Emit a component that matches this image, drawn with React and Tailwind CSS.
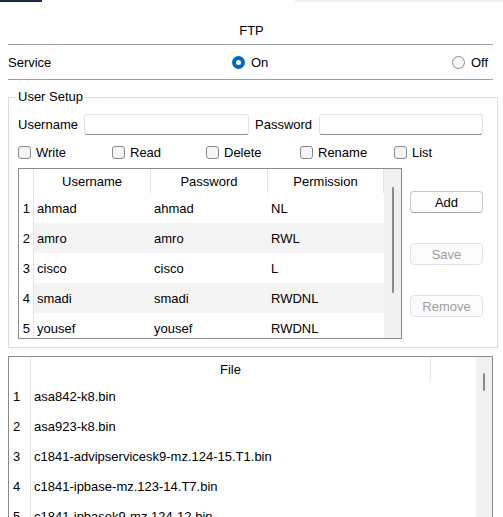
import React from 'react';

const users = [
  { n: 1, user: 'ahmad', pass: 'ahmad', perm: 'NL' },
  { n: 2, user: 'amro', pass: 'amro', perm: 'RWL' },
  { n: 3, user: 'cisco', pass: 'cisco', perm: 'L' },
  { n: 4, user: 'smadi', pass: 'smadi', perm: 'RWDNL' },
  { n: 5, user: 'yousef', pass: 'yousef', perm: 'RWDNL' },
];

const files = [
  'asa842-k8.bin',
  'asa923-k8.bin',
  'c1841-advipservicesk9-mz.124-15.T1.bin',
  'c1841-ipbase-mz.123-14.T7.bin',
  'c1841-ipbasek9-mz.124-12.bin',
  'c1841-ipbase-mz.124-12.bin',
];

const perms = ['Write', 'Read', 'Delete', 'Rename', 'List'];

const Radio = ({ checked, label }) => (
  <div className="flex items-center gap-[6px]">
    {checked ? (
      <span className="w-[13px] h-[13px] rounded-full bg-[#0067c0] flex items-center justify-center">
        <span className="w-[5px] h-[5px] rounded-full bg-white" />
      </span>
    ) : (
      <span className="w-[13px] h-[13px] rounded-full border border-[#8a8a8a] bg-[#f6f6f6]" />
    )}
    <span>{label}</span>
  </div>
);

const Checkbox = ({ label }) => (
  <div className="w-[94px] flex items-center gap-[5px]">
    <span className="w-[13px] h-[13px] rounded-[3px] border border-[#8a8a8a] bg-[#f5f5f5]" />
    <span>{label}</span>
  </div>
);

const Button = ({ children, disabled }) => (
  <button
    className={
      disabled
        ? 'w-[73px] h-[22px] rounded-[4px] border border-[#e3e3e3] bg-[#fbfbfb] text-[#9d9d9d]'
        : 'w-[73px] h-[22px] rounded-[4px] border border-[#c6c6c6] border-b-[#a8a8a8] bg-[#fdfdfd] text-black'
    }
  >
    {children}
  </button>
);

const UserTable = () => (
  <div className="w-[384px] h-[171px] border border-[#8a8a8a] flex overflow-hidden">
    <div className="w-[365px] flex flex-col">
      <div className="grid grid-cols-[14px_117px_117px_117px] h-[24px] shrink-0">
        <div />
        <div className="border-l border-[#e3e3e3] flex items-center justify-center">Username</div>
        <div className="border-l border-[#e3e3e3] flex items-center justify-center">Password</div>
        <div className="border-x border-[#e3e3e3] flex items-center justify-center">Permission</div>
      </div>
      {users.map((u) => (
        <div key={u.n} className="grid grid-cols-[14px_117px_117px_117px] h-[30px] shrink-0">
          <div className="flex items-center justify-end pr-[3px]">{u.n}</div>
          <div className={`border-l border-[#e3e3e3] flex items-center pl-[3px] ${u.n % 2 === 0 ? 'bg-[#f4f4f4]' : ''}`}>{u.user}</div>
          <div className={`flex items-center pl-[4px] ${u.n % 2 === 0 ? 'bg-[#f4f4f4]' : ''}`}>{u.pass}</div>
          <div className={`flex items-center pl-[4px] ${u.n % 2 === 0 ? 'bg-[#f4f4f4]' : ''}`}>{u.perm}</div>
        </div>
      ))}
    </div>
    <div className="w-[17px] bg-[#f0f0f0] pt-[18px] pl-[8px]">
      <div className="w-[2px] h-[106px] rounded-full bg-[#8a8a8a]" />
    </div>
  </div>
);

const FileTable = () => (
  <div className="ml-[8px] mt-[8px] w-[485px] h-[200px] shrink-0 border border-[#8a8a8a] flex overflow-hidden">
    <div className="w-[467px] flex flex-col">
      <div className="grid grid-cols-[21px_401px_45px] h-[24px] shrink-0">
        <div />
        <div className="border-x border-[#e3e3e3] flex items-center justify-center">File</div>
        <div />
      </div>
      {files.map((f, i) => (
        <div key={f} className="grid grid-cols-[21px_446px] h-[30px] shrink-0">
          <div className="flex items-center pl-[4px]">{i + 1}</div>
          <div className="border-l border-[#e3e3e3] flex items-center pl-[3px] whitespace-nowrap">{f}</div>
        </div>
      ))}
    </div>
    <div className="w-[16px] bg-[#f0f0f0] pt-[16px] pl-[7px]">
      <div className="w-[2px] h-[18px] rounded-full bg-[#8a8a8a]" />
    </div>
  </div>
);

export default function App() {
  return (
    <div className="w-[503px] h-[517px] overflow-hidden bg-white text-black text-[13px] leading-[15px] font-['Liberation_Sans',Arial,sans-serif] flex flex-col">
      <div className="flex h-[2px] shrink-0">
        <div className="w-[42px] bg-[#1c2b4a]" />
        <div className="ml-[253px] flex-1 bg-[#f0f0f0]" />
      </div>

      <div className="h-[42px] shrink-0 flex items-center justify-center pt-[14px]">FTP</div>
      <div className="ml-[8px] mr-[10px] border-t border-[#a0a0a0]" />

      <div className="h-[34px] shrink-0 ml-[8px] mr-[10px] pr-[5px] flex items-center pt-[1px]">
        <span className="w-[224px]">Service</span>
        <Radio checked label="On" />
        <div className="ml-auto">
          <Radio label="Off" />
        </div>
      </div>
      <div className="ml-[8px] mr-[10px] border-t border-[#a0a0a0]" />

      <fieldset className="ml-[8px] mr-[10px] mt-[9px] border border-[#dcdcdc] px-[9px] pb-[8px] shrink-0">
        <legend className="-ml-[2px] px-[2px] leading-[16px]">User Setup</legend>

        <div className="mt-[9px] h-[21px] flex items-center">
          <span className="w-[66px]">Username</span>
          <input className="w-[165px] h-[21px] rounded-[3px] border border-[#e2e2e2] border-b-[#8f8f8f] bg-white outline-none" />
          <span className="ml-[6px] w-[64px]">Password</span>
          <input className="w-[164px] h-[21px] rounded-[3px] border border-[#e2e2e2] border-b-[#8f8f8f] bg-white outline-none" />
        </div>

        <div className="mt-[8px] h-[18px] flex items-center">
          {perms.map((p) => (
            <Checkbox key={p} label={p} />
          ))}
        </div>

        <div className="mt-[7px] flex">
          <UserTable />
          <div className="ml-[8px] flex flex-col pt-[23px] gap-[30px]">
            <Button>Add</Button>
            <Button disabled>Save</Button>
            <Button disabled>Remove</Button>
          </div>
        </div>
      </fieldset>

      <FileTable />
    </div>
  );
}
